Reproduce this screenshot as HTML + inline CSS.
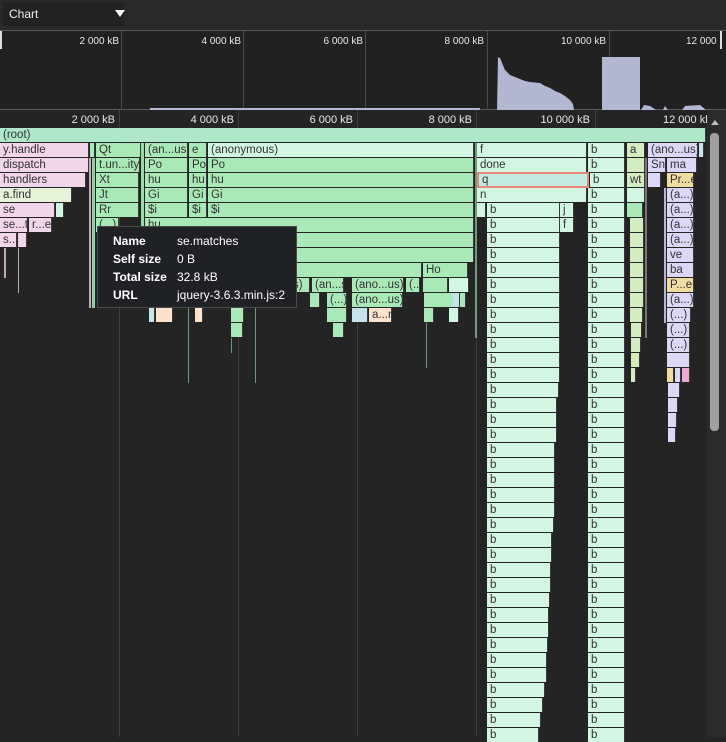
<!DOCTYPE html><html><head><meta charset="utf-8"><style>
*{margin:0;padding:0;box-sizing:border-box}
body{width:726px;height:737px;background:#242424;position:relative;overflow:hidden;font-family:"Liberation Sans",sans-serif}
.a{position:absolute}
.f{position:absolute;height:14px;font-size:11.5px;line-height:14px;color:#333;padding-left:3px;white-space:nowrap;overflow:hidden;border-right:1px solid #3a3a3a}
.P{background:#f1d5ea}.G{background:#a9e9b7}.L{background:#d3f6e3}.V{background:#dcd7f5}.Y{background:#f1dca2}.C{background:#fde2cc}.R{background:#aee8c9}.W{background:#d3edc0}.B{background:#c6e3ec}
.lbl{position:absolute;font-size:10px;color:#e8e8e8;text-align:right;width:80px}
.gl{position:absolute;width:1px;background:#3e3e3e}
.t{position:absolute;font-size:12px;color:#fff}
</style></head><body>
<div class="a" style="left:0;top:0;width:726px;height:30px;background:#292929"></div>
<div class="a" style="left:3px;top:2px;width:121px;height:24px;background:#222"></div>
<div class="a" style="left:9px;top:7px;font-size:12px;color:#eee">Chart</div>
<div class="a" style="left:115px;top:10px;width:0;height:0;border-left:5px solid transparent;border-right:5px solid transparent;border-top:7px solid #fff"></div>
<div class="a" style="left:0;top:30px;width:726px;height:80px;background:#212121;border-top:1px solid #5a5a5a;border-bottom:1px solid #5a5a5a"></div>
<div class="gl" style="left:121px;top:31px;height:79px;background:#4a4a4a"></div>
<div class="gl" style="left:243px;top:31px;height:79px;background:#4a4a4a"></div>
<div class="gl" style="left:365px;top:31px;height:79px;background:#4a4a4a"></div>
<div class="gl" style="left:487px;top:31px;height:79px;background:#4a4a4a"></div>
<div class="gl" style="left:609px;top:31px;height:79px;background:#4a4a4a"></div>
<div class="a" style="left:0;top:31px;width:2px;height:18px;background:#ddd"></div>
<div class="a" style="left:720px;top:31px;width:2px;height:18px;background:#ddd"></div>
<div class="lbl" style="left:39px;top:36px">2 000 kB</div>
<div class="lbl" style="left:161px;top:36px">4 000 kB</div>
<div class="lbl" style="left:283px;top:36px">6 000 kB</div>
<div class="lbl" style="left:404px;top:36px">8 000 kB</div>
<div class="lbl" style="left:526px;top:36px">10 000 kB</div>
<div class="a" style="left:686px;top:36px;font-size:10px;color:#e8e8e8">12 000</div>
<svg class="a" style="left:0;top:30px" width="726" height="80"><path d="M497 80 L498 27 L500 28 L505 40 L510 45 L515 47 L520 49 L525 51 L530 52 L540 53 L545 56 L550 58 L555 61 L560 63 L565 66 L570 70 L573 74 L574 80Z M602 80 L602 27 L640 27 L640 80Z M641 80 L644 75 L650 76 L656 80Z M663 80 L665 76 L668 80Z M682 80 L685 76 L700 75 L706 80Z M150 80 L150 78 L480 78 L480 80Z" fill="#b2b8d2"/></svg>
<div class="lbl" style="left:35px;top:114px;font-size:11px">2 000 kB</div>
<div class="lbl" style="left:154px;top:114px;font-size:11px">4 000 kB</div>
<div class="lbl" style="left:273px;top:114px;font-size:11px">6 000 kB</div>
<div class="lbl" style="left:392px;top:114px;font-size:11px">8 000 kB</div>
<div class="lbl" style="left:510px;top:114px;font-size:11px">10 000 kB</div>
<div class="a" style="left:663px;top:114px;font-size:11px;color:#e8e8e8">12 000 kl</div>
<div class="gl" style="left:119px;top:110px;height:627px"></div>
<div class="gl" style="left:238px;top:110px;height:627px"></div>
<div class="gl" style="left:357px;top:110px;height:627px"></div>
<div class="gl" style="left:476px;top:110px;height:627px"></div>
<div class="gl" style="left:595px;top:110px;height:627px"></div>
<div class="a" style="left:707px;top:110px;width:19px;height:627px;background:#2b2b2b"></div>
<div class="a" style="left:711px;top:120px;width:0;height:0;border-left:4px solid transparent;border-right:4px solid transparent;border-bottom:5px solid #bbb"></div>
<div class="a" style="left:710px;top:133px;width:9px;height:298px;background:#a0a0a0;border-radius:4px"></div>
<div class="f R" style="left:0;top:128px;width:706px">(root)</div>
<div class="f P" style="left:0;top:143px;width:89px">y.handle</div>
<div class="f G" style="left:90px;top:143px;width:5px"></div>
<div class="f G" style="left:96px;top:143px;width:45px">Qt</div>
<div class="f G" style="left:145px;top:143px;width:43px">(an...us)</div>
<div class="f G" style="left:189px;top:143px;width:18px">e</div>
<div class="f L" style="left:208px;top:143px;width:266px">(anonymous)</div>
<div class="f L" style="left:477px;top:143px;width:110px">f</div>
<div class="f L" style="left:588px;top:143px;width:37px">b</div>
<div class="f W" style="left:627px;top:143px;width:18px">a</div>
<div class="f V" style="left:648px;top:143px;width:50px">(ano...us)</div>
<div class="f B" style="left:699px;top:143px;width:5px"></div>
<div class="f P" style="left:0;top:158px;width:89px">dispatch</div>
<div class="f G" style="left:96px;top:158px;width:44px">t.un...ity</div>
<div class="f G" style="left:145px;top:158px;width:43px">Po</div>
<div class="f G" style="left:189px;top:158px;width:18px">Po</div>
<div class="f G" style="left:208px;top:158px;width:266px">Po</div>
<div class="f L" style="left:477px;top:158px;width:110px">done</div>
<div class="f L" style="left:588px;top:158px;width:37px">b</div>
<div class="f W" style="left:627px;top:158px;width:18px"></div>
<div class="f V" style="left:648px;top:158px;width:18px">Sn</div>
<div class="f V" style="left:667px;top:158px;width:30px">ma</div>
<div class="f P" style="left:0;top:173px;width:86px">handlers</div>
<div class="f G" style="left:96px;top:173px;width:43px">Xt</div>
<div class="f G" style="left:145px;top:173px;width:43px">hu</div>
<div class="f G" style="left:189px;top:173px;width:18px">hu</div>
<div class="f G" style="left:208px;top:173px;width:266px">hu</div>
<div class="f" style="left:477px;top:172px;width:112px;height:16px;background:#c2ece0;border:2px solid #e8877a;line-height:12px">q</div>
<div class="f L" style="left:590px;top:173px;width:35px">b</div>
<div class="f W" style="left:627px;top:173px;width:18px">wt</div>
<div class="f V" style="left:648px;top:173px;width:13px"></div>
<div class="f Y" style="left:667px;top:173px;width:27px">Pr...e</div>
<div class="f" style="left:0;top:188px;width:72px;background:#e5f4d9">a.find</div>
<div class="f G" style="left:96px;top:188px;width:43px">Jt</div>
<div class="f G" style="left:145px;top:188px;width:43px">Gi</div>
<div class="f G" style="left:189px;top:188px;width:18px">Gi</div>
<div class="f G" style="left:208px;top:188px;width:266px">Gi</div>
<div class="f L" style="left:477px;top:188px;width:110px">n</div>
<div class="f L" style="left:588px;top:188px;width:37px">b</div>
<div class="f L" style="left:627px;top:188px;width:18px"></div>
<div class="f V" style="left:667px;top:188px;width:27px">(a...)</div>
<div class="f P" style="left:0;top:203px;width:55px">se</div>
<div class="f L" style="left:56px;top:203px;width:8px"></div>
<div class="f G" style="left:96px;top:203px;width:43px">Rr</div>
<div class="f G" style="left:145px;top:203px;width:43px">$i</div>
<div class="f G" style="left:189px;top:203px;width:18px">$i</div>
<div class="f G" style="left:208px;top:203px;width:266px">$i</div>
<div class="f L" style="left:477px;top:203px;width:9px"></div>
<div class="f L" style="left:487px;top:203px;width:73px">b</div>
<div class="f L" style="left:560px;top:203px;width:14px">j</div>
<div class="f L" style="left:588px;top:203px;width:37px">b</div>
<div class="f G" style="left:627px;top:203px;width:16px"></div>
<div class="f V" style="left:667px;top:203px;width:27px">(a...)</div>
<div class="f P" style="left:0;top:218px;width:28px">se...t</div>
<div class="f P" style="left:29px;top:218px;width:23px">r...e</div>
<div class="f G" style="left:96px;top:218px;width:23px">(...)</div>
<div class="f G" style="left:145px;top:218px;width:329px">hu</div>
<div class="f L" style="left:487px;top:218px;width:73px">b</div>
<div class="f L" style="left:560px;top:218px;width:14px">f</div>
<div class="f L" style="left:588px;top:218px;width:37px">b</div>
<div class="f W" style="left:630px;top:218px;width:14px"></div>
<div class="f V" style="left:667px;top:218px;width:27px">(a...)</div>
<div class="f P" style="left:0;top:233px;width:17px">s...</div>
<div class="f P" style="left:18px;top:233px;width:9px"></div>
<div class="f G" style="left:145px;top:233px;width:329px"></div>
<div class="f L" style="left:487px;top:233px;width:73px">b</div>
<div class="f L" style="left:588px;top:233px;width:37px">b</div>
<div class="f W" style="left:630px;top:233px;width:14px"></div>
<div class="f V" style="left:667px;top:233px;width:27px">(a...)</div>
<div class="f G" style="left:145px;top:248px;width:329px"></div>
<div class="f L" style="left:487px;top:248px;width:73px">b</div>
<div class="f L" style="left:588px;top:248px;width:37px">b</div>
<div class="f W" style="left:630px;top:248px;width:14px"></div>
<div class="f V" style="left:667px;top:248px;width:27px">ve</div>
<div class="f G" style="left:145px;top:263px;width:277px"></div>
<div class="f G" style="left:423px;top:263px;width:45px">Ho</div>
<div class="f L" style="left:487px;top:263px;width:73px">b</div>
<div class="f L" style="left:588px;top:263px;width:37px">b</div>
<div class="f W" style="left:630px;top:263px;width:14px"></div>
<div class="f V" style="left:667px;top:263px;width:27px">ba</div>
<div class="f G" style="left:290px;top:278px;width:20px">s)</div>
<div class="f G" style="left:312px;top:278px;width:32px">(an...s)</div>
<div class="f G" style="left:352px;top:278px;width:52px">(ano...us)</div>
<div class="f G" style="left:406px;top:278px;width:14px">(...</div>
<div class="f G" style="left:423px;top:278px;width:25px"></div>
<div class="f L" style="left:449px;top:278px;width:20px"></div>
<div class="f L" style="left:487px;top:278px;width:73px">b</div>
<div class="f L" style="left:588px;top:278px;width:37px">b</div>
<div class="f W" style="left:630px;top:278px;width:14px"></div>
<div class="f Y" style="left:667px;top:278px;width:27px">P...e</div>
<div class="f G" style="left:310px;top:293px;width:10px"></div>
<div class="f G" style="left:327px;top:293px;width:20px">(...)</div>
<div class="f G" style="left:352px;top:293px;width:51px">(ano...us)</div>
<div class="f G" style="left:424px;top:293px;width:42px"></div>
<div class="f B" style="left:453px;top:293px;width:7px"></div>
<div class="f L" style="left:487px;top:293px;width:73px">b</div>
<div class="f L" style="left:588px;top:293px;width:37px">b</div>
<div class="f W" style="left:630px;top:293px;width:14px"></div>
<div class="f V" style="left:667px;top:293px;width:27px">(a...)</div>
<div class="f B" style="left:149px;top:308px;width:6px"></div>
<div class="f C" style="left:156px;top:308px;width:17px"></div>
<div class="f C" style="left:195px;top:308px;width:8px"></div>
<div class="f G" style="left:231px;top:308px;width:13px"></div>
<div class="f G" style="left:327px;top:308px;width:20px"></div>
<div class="f B" style="left:352px;top:308px;width:16px"></div>
<div class="f C" style="left:369px;top:308px;width:23px">a...n</div>
<div class="f G" style="left:424px;top:308px;width:10px"></div>
<div class="f L" style="left:449px;top:308px;width:10px"></div>
<div class="f L" style="left:487px;top:308px;width:73px">b</div>
<div class="f L" style="left:588px;top:308px;width:37px">b</div>
<div class="f W" style="left:630px;top:308px;width:13px"></div>
<div class="f V" style="left:667px;top:308px;width:24px">(...)</div>
<div class="f G" style="left:231px;top:323px;width:12px"></div>
<div class="f G" style="left:333px;top:323px;width:11px"></div>
<div class="f L" style="left:487px;top:323px;width:73px">b</div>
<div class="f L" style="left:588px;top:323px;width:37px">b</div>
<div class="f W" style="left:631px;top:323px;width:11px"></div>
<div class="f V" style="left:667px;top:323px;width:23px">(...)</div>
<div class="f L" style="left:487px;top:338px;width:73px">b</div><div class="f L" style="left:588px;top:338px;width:37px">b</div><div class="f W" style="left:631px;top:338px;width:10px"></div><div class="f V" style="left:667px;top:338px;width:23px">(...)</div>
<div class="f L" style="left:487px;top:353px;width:73px">b</div><div class="f L" style="left:588px;top:353px;width:37px">b</div><div class="f W" style="left:631px;top:353px;width:9px"></div><div class="f V" style="left:667px;top:353px;width:23px"></div>
<div class="f L" style="left:487px;top:368px;width:73px">b</div><div class="f L" style="left:588px;top:368px;width:37px">b</div><div class="f W" style="left:631px;top:368px;width:5px"></div><div class="f Y" style="left:667px;top:368px;width:7px"></div><div class="f V" style="left:675px;top:368px;width:6px"></div><div class="f" style="left:682px;top:368px;width:8px;background:#eeaad4"></div>
<div class="f L" style="left:487px;top:383px;width:72px">b</div><div class="f L" style="left:588px;top:383px;width:37px">b</div><div class="f V" style="left:668px;top:383px;width:12px"></div>
<div class="f L" style="left:487px;top:398px;width:70px">b</div><div class="f L" style="left:588px;top:398px;width:37px">b</div><div class="f V" style="left:668px;top:398px;width:10px"></div>
<div class="f L" style="left:487px;top:413px;width:70px">b</div><div class="f L" style="left:588px;top:413px;width:37px">b</div><div class="f V" style="left:668px;top:413px;width:9px"></div>
<div class="f L" style="left:487px;top:428px;width:70px">b</div><div class="f L" style="left:588px;top:428px;width:37px">b</div><div class="f V" style="left:668px;top:428px;width:8px"></div>
<div class="f L" style="left:487px;top:443px;width:68px">b</div><div class="f L" style="left:588px;top:443px;width:37px">b</div>
<div class="f L" style="left:487px;top:458px;width:68px">b</div><div class="f L" style="left:588px;top:458px;width:37px">b</div>
<div class="f L" style="left:487px;top:473px;width:68px">b</div><div class="f L" style="left:588px;top:473px;width:37px">b</div>
<div class="f L" style="left:487px;top:488px;width:68px">b</div><div class="f L" style="left:588px;top:488px;width:37px">b</div>
<div class="f L" style="left:487px;top:503px;width:68px">b</div><div class="f L" style="left:588px;top:503px;width:37px">b</div>
<div class="f L" style="left:487px;top:518px;width:67px">b</div><div class="f L" style="left:588px;top:518px;width:37px">b</div>
<div class="f L" style="left:487px;top:533px;width:65px">b</div><div class="f L" style="left:588px;top:533px;width:37px">b</div>
<div class="f L" style="left:487px;top:548px;width:65px">b</div><div class="f L" style="left:588px;top:548px;width:37px">b</div>
<div class="f L" style="left:487px;top:563px;width:64px">b</div><div class="f L" style="left:588px;top:563px;width:37px">b</div>
<div class="f L" style="left:487px;top:578px;width:64px">b</div><div class="f L" style="left:588px;top:578px;width:37px">b</div>
<div class="f L" style="left:487px;top:593px;width:63px">b</div><div class="f L" style="left:588px;top:593px;width:37px">b</div>
<div class="f L" style="left:487px;top:608px;width:62px">b</div><div class="f L" style="left:588px;top:608px;width:37px">b</div>
<div class="f L" style="left:487px;top:623px;width:62px">b</div><div class="f L" style="left:588px;top:623px;width:37px">b</div>
<div class="f L" style="left:487px;top:638px;width:61px">b</div><div class="f L" style="left:588px;top:638px;width:37px">b</div>
<div class="f L" style="left:487px;top:653px;width:60px">b</div><div class="f L" style="left:588px;top:653px;width:37px">b</div>
<div class="f L" style="left:487px;top:668px;width:60px">b</div><div class="f L" style="left:588px;top:668px;width:37px">b</div>
<div class="f L" style="left:487px;top:683px;width:58px">b</div><div class="f L" style="left:588px;top:683px;width:37px">b</div>
<div class="f L" style="left:487px;top:698px;width:56px">b</div><div class="f L" style="left:588px;top:698px;width:37px">b</div>
<div class="f L" style="left:487px;top:713px;width:54px">b</div><div class="f L" style="left:588px;top:713px;width:37px">b</div>
<div class="f L" style="left:487px;top:728px;width:52px">b</div><div class="f L" style="left:588px;top:728px;width:37px">b</div>
<div class="a" style="left:188px;top:308px;width:1px;height:75px;background:#6a9a78"></div>
<div class="a" style="left:255px;top:308px;width:1px;height:75px;background:#6a9a78"></div>
<div class="a" style="left:231px;top:338px;width:1px;height:15px;background:#6a9a78"></div>
<div class="a" style="left:426px;top:323px;width:1px;height:45px;background:#6a9a78"></div>
<div class="a" style="left:4px;top:248px;width:2px;height:30px;background:#c0a8b8"></div>
<div class="a" style="left:18px;top:248px;width:1px;height:45px;background:#c0a8b8"></div>
<div class="a" style="left:89px;top:158px;width:2px;height:150px;background:#c8a8c0"></div>
<div class="a" style="left:92px;top:158px;width:3px;height:150px;background:#8fd0a0"></div>
<div class="a" style="left:141px;top:143px;width:3px;height:165px;background:#9bd8aa"></div>
<div class="a" style="left:475px;top:143px;width:2px;height:195px;background:#6f9a7f"></div>
<div class="a" style="left:645px;top:158px;width:2px;height:180px;background:#777"></div>
<div class="a" style="left:664px;top:188px;width:2px;height:135px;background:#b9b4dd"></div>
<div class="a" style="left:97px;top:226px;width:200px;height:82px;background:#202124;border:1px solid #4a4a4a"></div>
<div class="t" style="left:113px;top:234px;font-weight:bold">Name</div><div class="t" style="left:177px;top:234px">se.matches</div>
<div class="t" style="left:113px;top:252px;font-weight:bold">Self size</div><div class="t" style="left:177px;top:252px">0 B</div>
<div class="t" style="left:113px;top:270px;font-weight:bold">Total size</div><div class="t" style="left:177px;top:270px">32.8 kB</div>
<div class="t" style="left:113px;top:288px;font-weight:bold">URL</div><div class="t" style="left:177px;top:288px">jquery-3.6.3.min.js:2</div>
</body></html>
